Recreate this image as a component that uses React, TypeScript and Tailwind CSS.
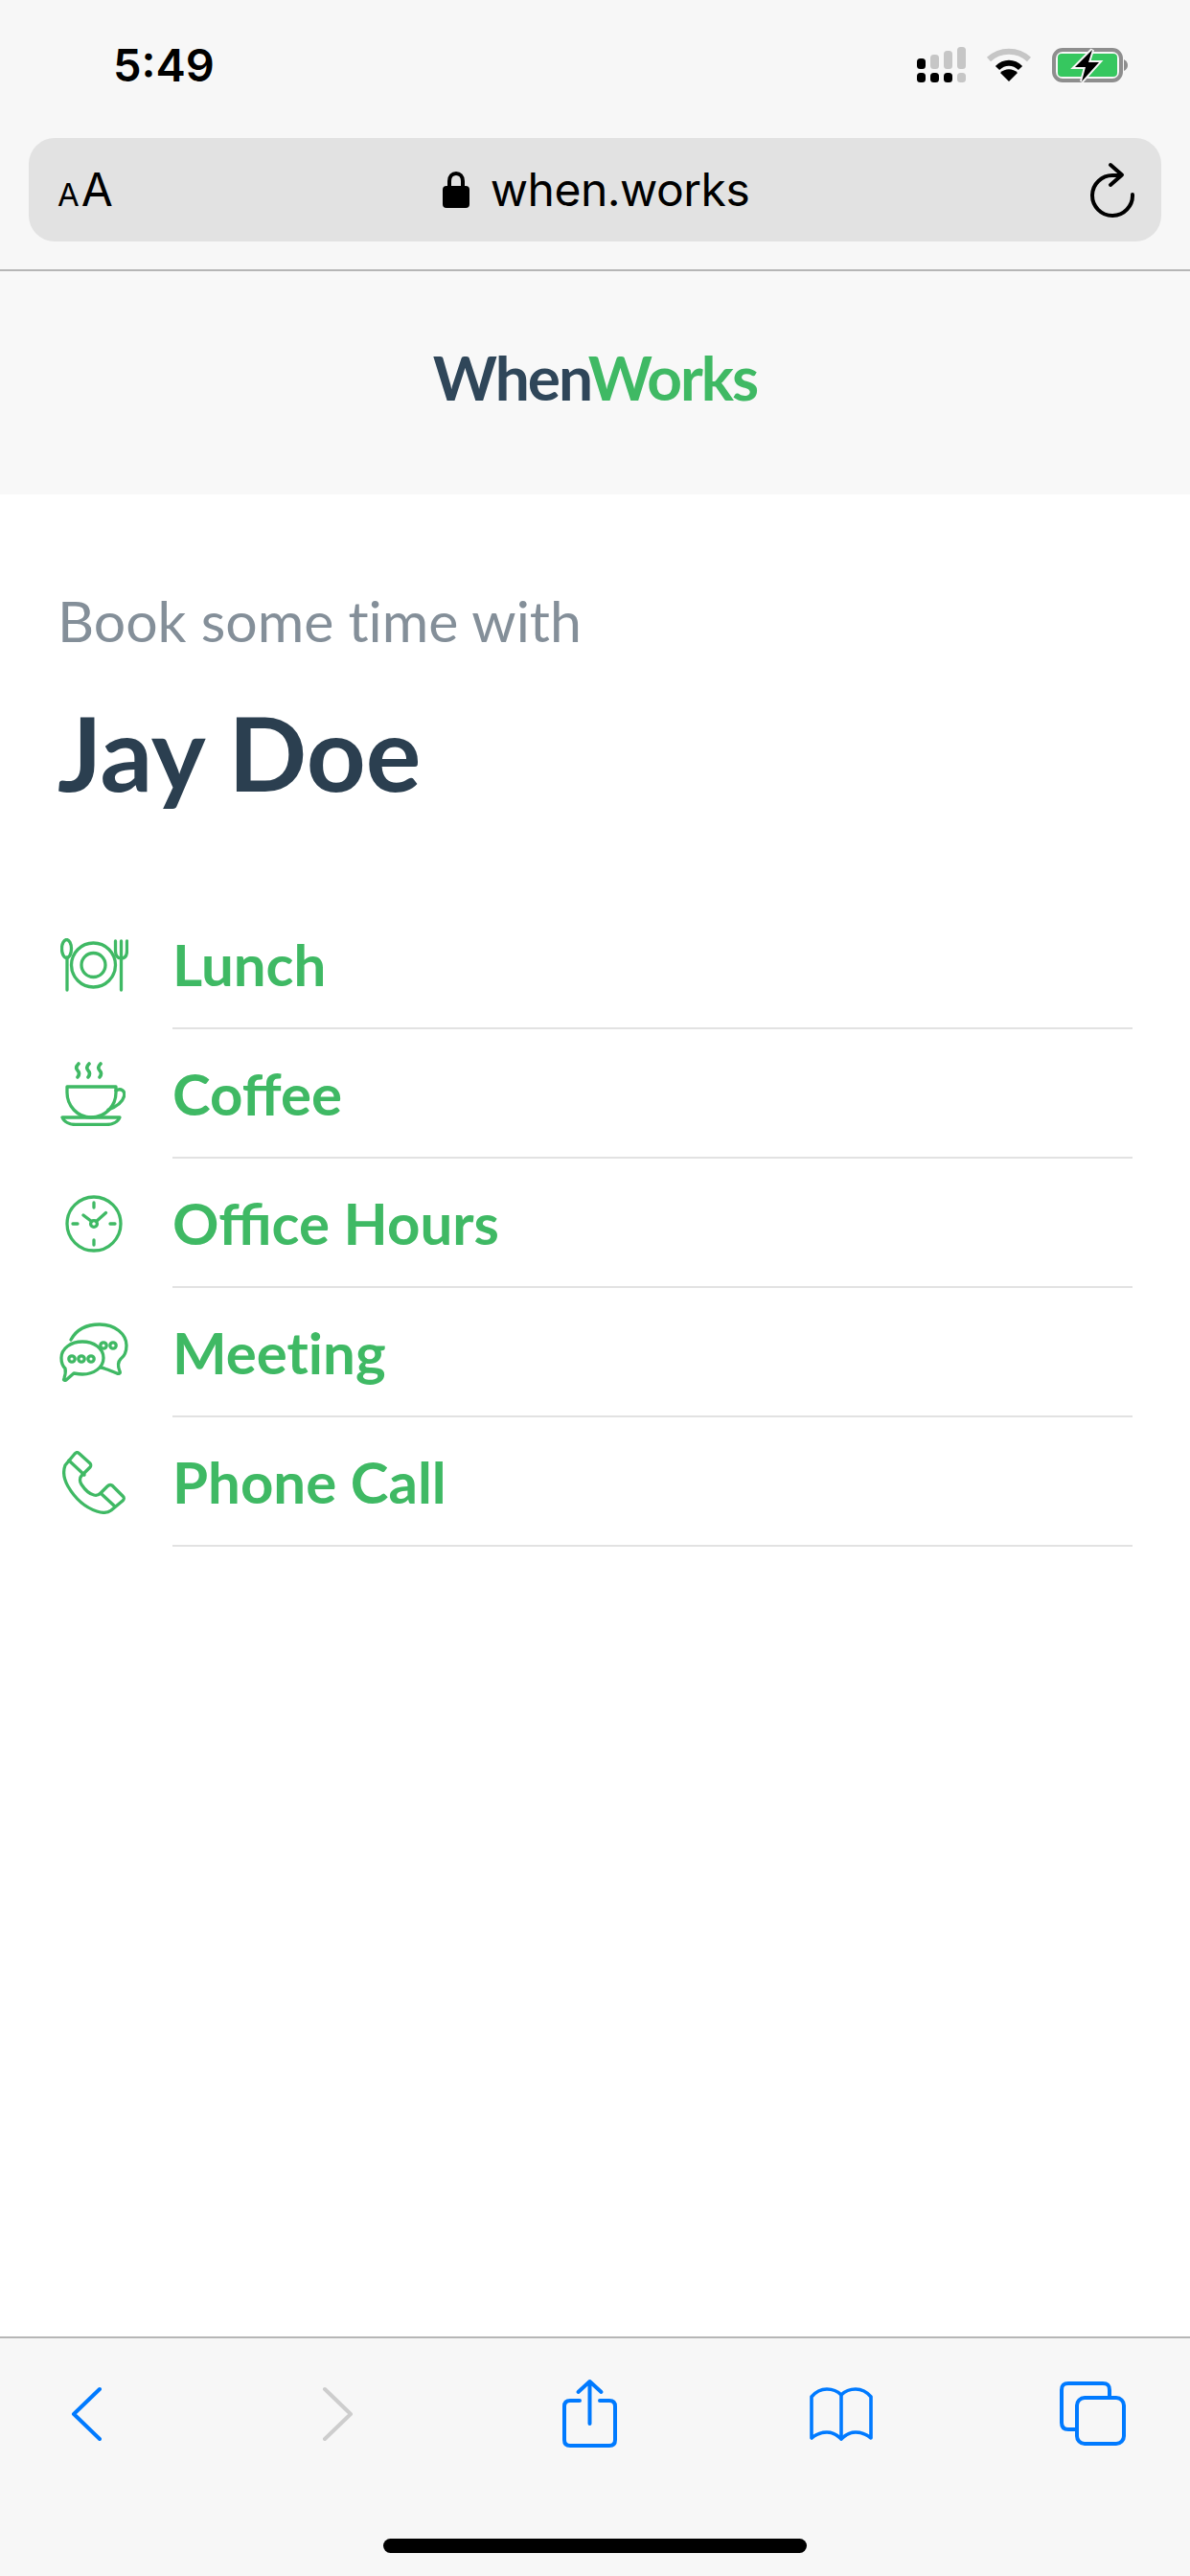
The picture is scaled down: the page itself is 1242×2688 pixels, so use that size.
import React from "react";

const green = "#3fb964";

function Lunch() {
  return (
    <svg width="71" height="56" viewBox="0 0 71 56" fill="none" stroke={green} strokeWidth="3.3" strokeLinecap="round" strokeLinejoin="round">
      <ellipse cx="6.5" cy="11" rx="5" ry="9.5" />
      <path d="M7 20V54" />
      <circle cx="34.5" cy="28" r="23" />
      <circle cx="34.5" cy="28" r="12.5" />
      <path d="M63.5 54V3M57.5 3V13Q57.5 21 63.5 21Q69.5 21 69.5 13V3" />
    </svg>
  );
}

function Coffee() {
  return (
    <svg width="68" height="67" viewBox="0 0 68 67" fill="none" stroke={green} strokeWidth="3.3" strokeLinecap="round" strokeLinejoin="round" className="-ml-[2px]">
      <path d="M19 2Q15 6 18 9Q21 12 18 16M30 2Q26 6 29 9Q32 12 29 16M42 2Q38 6 41 9Q44 12 41 16" strokeWidth="3.6" />
      <path d="M7 26H58V32C58 46 47 58 32 58C18 58 7 46 7 32Z" />
      <path d="M58 30C63 27 68 30 66.5 36C65 42 58 47 50 50" />
      <path d="M2 58H62C60 63 54 65.5 48 65.5H16C10 65.5 4 63 2 58Z" />
    </svg>
  );
}

function Clock() {
  return (
    <svg width="60" height="60" viewBox="0 0 60 60" fill="none" stroke={green} strokeWidth="3.3" strokeLinecap="round" strokeLinejoin="round">
      <circle cx="30" cy="30" r="28" />
      <path d="M30 8V13M30 47V52M8 30H13M47 30H52" />
      <circle cx="30" cy="30" r="3.4" />
      <path d="M27.5 27.5L19 21M32.5 27.5L42.5 18.5" />
    </svg>
  );
}

function Chat() {
  return (
    <svg width="72" height="63" viewBox="0 0 72 63" fill="none" stroke={green} strokeWidth="3.3" strokeLinecap="round" strokeLinejoin="round">
      <path d="M12 18C18 7 29 2 42 2C58 2 70 12 70 24C70 30 68 35 64 38C61 41 61 46 63 51C64 53 62 54 60 53L50 49C47 48 45 47 43 47" />
      <path d="M2 37C2 27 12 20 24 20C36 20 46 27 46 37C46 47 36 54 24 54C21 54 18 53.5 15 53L7 60C5 61 4 60 5 58C6 55 7 52 6 48C3 45 2 41 2 37Z" />
      <circle cx="13" cy="38" r="3.2" />
      <circle cx="23" cy="38" r="3.2" />
      <circle cx="33" cy="38" r="3.2" />
      <circle cx="46" cy="24" r="3.2" />
      <circle cx="56" cy="24" r="3.2" />
    </svg>
  );
}

function Phone() {
  return (
    <svg width="66" height="66" viewBox="0 0 66 66" fill="none" stroke={green} strokeWidth="3.3" strokeLinecap="round" strokeLinejoin="round">
      <path d="M3 15L13 3C15 1 16 1 18 3L29 13C30 14 30 16 29 17L20 26C18 28 18 32 20 35C24 41 28 45 33 46C36 47 38 46 40 44L47 37C49 35 50 35 52 36L63 47C65 49 65 50 63 52L51 62C47 65 42 65 36 63C24 59 13 49 6 37C2 30 0 23 3 15Z" />
      <path d="M7 10L23 25M41 45L55 58" />
    </svg>
  );
}

const rows = [
  { label: "Lunch", icon: <Lunch />, text: "" },
  { label: "Coffee", icon: <Coffee />, text: "" },
  { label: "Office Hours", icon: <Clock />, text: "" },
  { label: "Meeting", icon: <Chat />, text: "[font-variant-ligatures:none]" },
  { label: "Phone Call", icon: <Phone />, text: "" },
];

function StatusIcons() {
  return (
    <div className="flex items-center gap-[21px]">
      <svg width="51" height="38" viewBox="0 0 51 38">
        <rect x="0" y="12" width="9" height="11" rx="3.5" fill="#000" />
        <rect x="14" y="8" width="9" height="15" rx="3.5" fill="#c6c6c6" />
        <rect x="28" y="4" width="9" height="19" rx="3.5" fill="#c6c6c6" />
        <rect x="42" y="0" width="9" height="23" rx="3.5" fill="#c6c6c6" />
        <rect x="0" y="27" width="9" height="10" rx="3.5" fill="#000" />
        <rect x="14" y="27" width="9" height="10" rx="3.5" fill="#000" />
        <rect x="28" y="27" width="9" height="10" rx="3.5" fill="#000" />
        <rect x="42" y="27" width="9" height="10" rx="3.5" fill="#c6c6c6" />
      </svg>
      <svg width="48" height="36" viewBox="0 0 48 36" fill="none">
        <path d="M3 12C15 1 33 1 45 12" stroke="#c6c6c6" strokeWidth="6" />
        <path d="M12 21C19 14 29 14 36 21" stroke="#000" strokeWidth="6" />
        <path d="M15 26L24 35L33 26C28 21 20 21 15 26Z" fill="#000" />
      </svg>
      <svg width="80" height="36" viewBox="0 0 80 36">
        <rect x="2" y="2" width="70" height="32" rx="9" fill="none" stroke="#8e8e8e" strokeWidth="4" />
        <rect x="6" y="6" width="62" height="24" rx="4" fill="#36c75f" />
        <path d="M75 12Q79 14 79 18Q79 22 75 24Z" fill="#8e8e8e" />
        <path d="M42 2L24 20H35L31 35L49 15H38Z" fill="#000" stroke="#f7f7f7" strokeWidth="4" paintOrder="stroke" />
      </svg>
    </div>
  );
}

export default function App() {
  return (
    <div className="flex h-[2688px] w-[1242px] flex-col bg-white font-['Lato',sans-serif]">
      <div className="border-b-[2px] border-[#b6b6b6] bg-[#f7f7f7]">
        <div className="flex h-[144px] items-start justify-between pl-[118px] pr-[64px] pt-[41px]">
          <span className="font-['Inter',sans-serif] text-[47px] leading-[54px] font-semibold text-black">5:49</span>
          <div className="pt-[8px]">
            <StatusIcons />
          </div>
        </div>
        <div className="mx-[30px] mb-[29px] grid h-[108px] grid-cols-[1fr_auto_1fr] items-center rounded-[27px] bg-[#e2e2e2] pl-[30px] pr-[26px] font-['Inter',sans-serif] text-black">
          <span className="flex items-baseline gap-[2px]">
            <span className="text-[33px]">A</span>
            <span className="text-[48px]">A</span>
          </span>
          <span className="mr-[2px] flex items-center gap-[22px] text-[48px] leading-none tracking-[-0.5px]">
            <svg width="28" height="38" viewBox="0 0 28 38">
              <path d="M7 17V10C7 5 10 2 14 2C18 2 21 5 21 10V17" fill="none" stroke="#000" strokeWidth="4" />
              <rect x="0" y="15" width="28" height="23" rx="4" fill="#000" />
            </svg>
            when.works
          </span>
          <svg width="50" height="58" viewBox="0 0 50 58" fill="none" stroke="#000" strokeWidth="4" strokeLinecap="round" strokeLinejoin="round" className="justify-self-end">
            <path d="M33 14H26A21 21 0 1 0 46 34" />
            <path d="M23 3L35 13.5L23 24" />
          </svg>
        </div>
      </div>

      <header className="flex h-[233px] items-center justify-center bg-[#f8f8f8] pb-[11px]">
        <span className="text-[64px] font-bold tracking-[-2px] text-[#2f4659]">
          When<span className="text-[#3fb964]">Works</span>
        </span>
      </header>

      <main className="flex-1 pl-[60px] pr-[60px] pt-[96px]">
        <p className="text-[59px] leading-[72px] text-[#848f99] [font-variant-ligatures:none]">Book some time with</p>
        <h1 className="mt-[40px] text-[108px] leading-[120px] font-bold text-[#2b3f50]">Jay Doe</h1>
        <ul className="mt-[95px]">
          {rows.map((r) => (
            <li key={r.label} className="flex h-[135px] items-center">
              <span className="ml-[2px] flex w-[72px] shrink-0 items-center justify-center">{r.icon}</span>
              <span className={`ml-[46px] flex h-full flex-1 items-center border-b-[2px] border-[#e2e2e2] text-[60px] font-bold text-[#3fb964] ${r.text}`}>
                {r.label}
              </span>
            </li>
          ))}
        </ul>
      </main>

      <footer className="relative h-[250px] border-t-[2px] border-[#b6b6b6] bg-[#f7f7f7]">
        <div className="flex h-[158px] items-center justify-between pl-[40px] pr-[51px]">
          <span className="flex w-[100px] justify-center">
            <svg width="36" height="58" viewBox="0 0 36 58" fill="none" stroke="#007aff" strokeWidth="4" strokeLinecap="round" strokeLinejoin="round">
              <path d="M32 3L5 29L32 55" />
            </svg>
          </span>
          <span className="flex w-[100px] justify-center">
            <svg width="36" height="58" viewBox="0 0 36 58" fill="none" stroke="#cdcdcd" strokeWidth="4" strokeLinecap="round" strokeLinejoin="round">
              <path d="M4 3L31 29L4 55" />
            </svg>
          </span>
          <span className="flex w-[100px] justify-center">
            <svg width="60" height="74" viewBox="0 0 60 74" fill="none" stroke="#007aff" strokeWidth="4" strokeLinecap="round" strokeLinejoin="round">
              <path d="M29.5 3V47M17.5 14L29.5 3L41.5 14" />
              <path d="M19 23H9C5 23 3 25 3 29V64C3 68 5 70 9 70H50C54 70 56 68 56 64V29C56 25 54 23 50 23H40" />
            </svg>
          </span>
          <span className="flex w-[100px] justify-center">
            <svg width="68" height="58" viewBox="0 0 68 58" fill="none" stroke="#007aff" strokeWidth="3.6" strokeLinecap="round" strokeLinejoin="round">
              <path d="M34 9V55" />
              <path d="M3 54V11C8 5 14 3 19 3C25 3 30 5 34 9C38 5 43 3 49 3C54 3 60 5 65 11V54C60 50 54 48 49 48C43 48 38 51 34 55C30 51 25 48 19 48C14 48 8 50 3 54Z" />
            </svg>
          </span>
          <span className="flex w-[100px] justify-center">
            <svg width="72" height="70" viewBox="0 0 72 70" fill="none" stroke="#007aff" strokeWidth="4" strokeLinejoin="round">
              <path d="M17 51H10C5 51 3 48 3 44V10C3 5 5 3 10 3H46C51 3 53 5 53 10V16" />
              <rect x="19" y="18" width="49" height="48" rx="8" />
            </svg>
          </span>
        </div>
        <div className="absolute bottom-[24px] left-[400px] h-[15px] w-[442px] rounded-full bg-black" />
      </footer>
    </div>
  );
}
